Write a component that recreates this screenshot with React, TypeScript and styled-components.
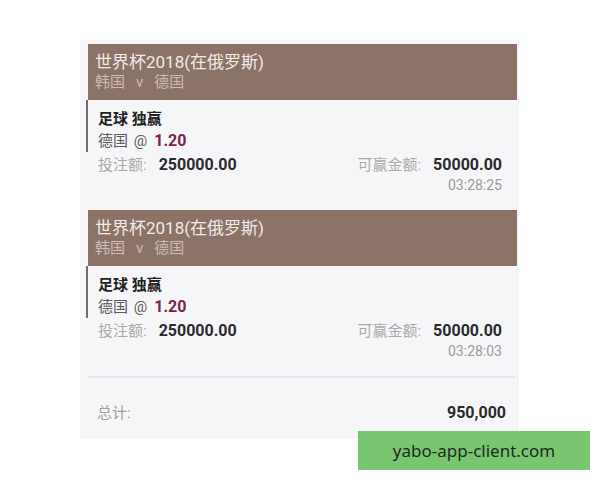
import styled, { createGlobalStyle } from 'styled-components';

interface IBet {
	match: string;
	time: string;
}

const bets: IBet[] = [
	{ match: '韩国', time: '03:28:25' },
	{ match: '韩国', time: '03:28:03' },
];

const GlobalStyle = createGlobalStyle`
	body {
		margin: 0;
		background: #ffffff;
		font-family: Roboto, "Noto Sans CJK SC", sans-serif;
	}
`;

const BetCard = ({ bet }: { bet: IBet }) => {
	return (
		<Card>
			<Header>
				<Title>世界杯2018(在俄罗斯)</Title>
				<Teams>
					{bet.match}
					<Versus>v</Versus>
					德国
				</Teams>
			</Header>
			<Selection>
				<Market>足球 独赢</Market>
				<Pick>
					德国 <At>@</At>
					<Odds>1.20</Odds>
				</Pick>
			</Selection>
			<AmountRow>
				<span>
					<Label>投注额:</Label>
					<Value>250000.00</Value>
				</span>
				<span>
					<Label>可赢金额:</Label>
					<Value>50000.00</Value>
				</span>
			</AmountRow>
			<Time>{bet.time}</Time>
		</Card>
	);
};

const App = () => {
	return (
		<>
			<GlobalStyle />
			<Panel>
				{bets.map((bet, i) => (
					<BetCard key={i} bet={bet} />
				))}
				<Divider />
				<TotalRow>
					<Label>总计:</Label>
					<Value>950,000</Value>
				</TotalRow>
			</Panel>
			<Watermark>yabo-app-client.com</Watermark>
		</>
	);
};

export default App;

const Panel = styled.div`
	display: flex;
	flex-direction: column;

	width: 439px;
	height: 399px;
	margin: 40px 0 0 80px;
	padding: 4px 2px 0 8px;
	box-sizing: border-box;

	background: #f6f6f9;
`;

const Card = styled.div`
	display: flex;
	flex-direction: column;

	padding-bottom: 16px;
`;

const Header = styled.div`
	display: flex;
	flex-direction: column;
	justify-content: center;

	height: 56px;
	padding: 0 7px;
	box-sizing: border-box;

	background: #8b7467;
`;

const Title = styled.span`
	font-size: 17px;
	line-height: 21px;
	color: #f2e9e8;
`;

const Teams = styled.span`
	font-size: 15px;
	line-height: 19px;
	color: #cbbab5;
`;

const Versus = styled.span`
	margin: 0 11px;
`;

const Selection = styled.div`
	display: flex;
	flex-direction: column;

	margin-left: -2px;
	padding: 8px 0 0 10px;

	border-left: 2px solid #6e6e6e;
`;

const Market = styled.span`
	font-size: 15px;
	font-weight: 700;
	line-height: 22px;
	color: #222222;
`;

const Pick = styled.span`
	font-size: 15px;
	line-height: 22px;
	color: #5a5a5a;
`;

const At = styled.span`
	margin: 0 7px 0 2px;
`;

const Odds = styled.span`
	font-size: 16px;
	font-weight: 700;
	color: #7a2450;
`;

const AmountRow = styled.div`
	display: flex;
	justify-content: space-between;

	margin-top: 2px;
	padding: 0 15px 0 10px;

	line-height: 22px;
`;

const Label = styled.span`
	margin-right: 12px;

	font-size: 15px;
	color: #ababab;
`;

const Value = styled.span`
	font-size: 16px;
	font-weight: 700;
	color: #2a2a2e;
`;

const Time = styled.span`
	align-self: flex-end;

	padding-right: 15px;

	font-size: 14px;
	line-height: 18px;
	color: #9a9a9a;
`;

const Divider = styled.div`
	height: 2px;
	margin-right: 2px;

	background: #e6e6ea;
`;

const TotalRow = styled.div`
	display: flex;
	justify-content: space-between;

	padding: 24px 11px 0 9px;

	line-height: 22px;

	> span:first-child {
		color: #a0a0a0;
	}
`;

const Watermark = styled.div`
	position: absolute;
	left: 358px;
	top: 431px;

	display: flex;
	align-items: center;
	justify-content: center;

	width: 232px;
	height: 39px;

	background: #78c66f;

	font-family: "Noto Sans", sans-serif;
	font-size: 17px;
	color: #1f2a1f;
`;
